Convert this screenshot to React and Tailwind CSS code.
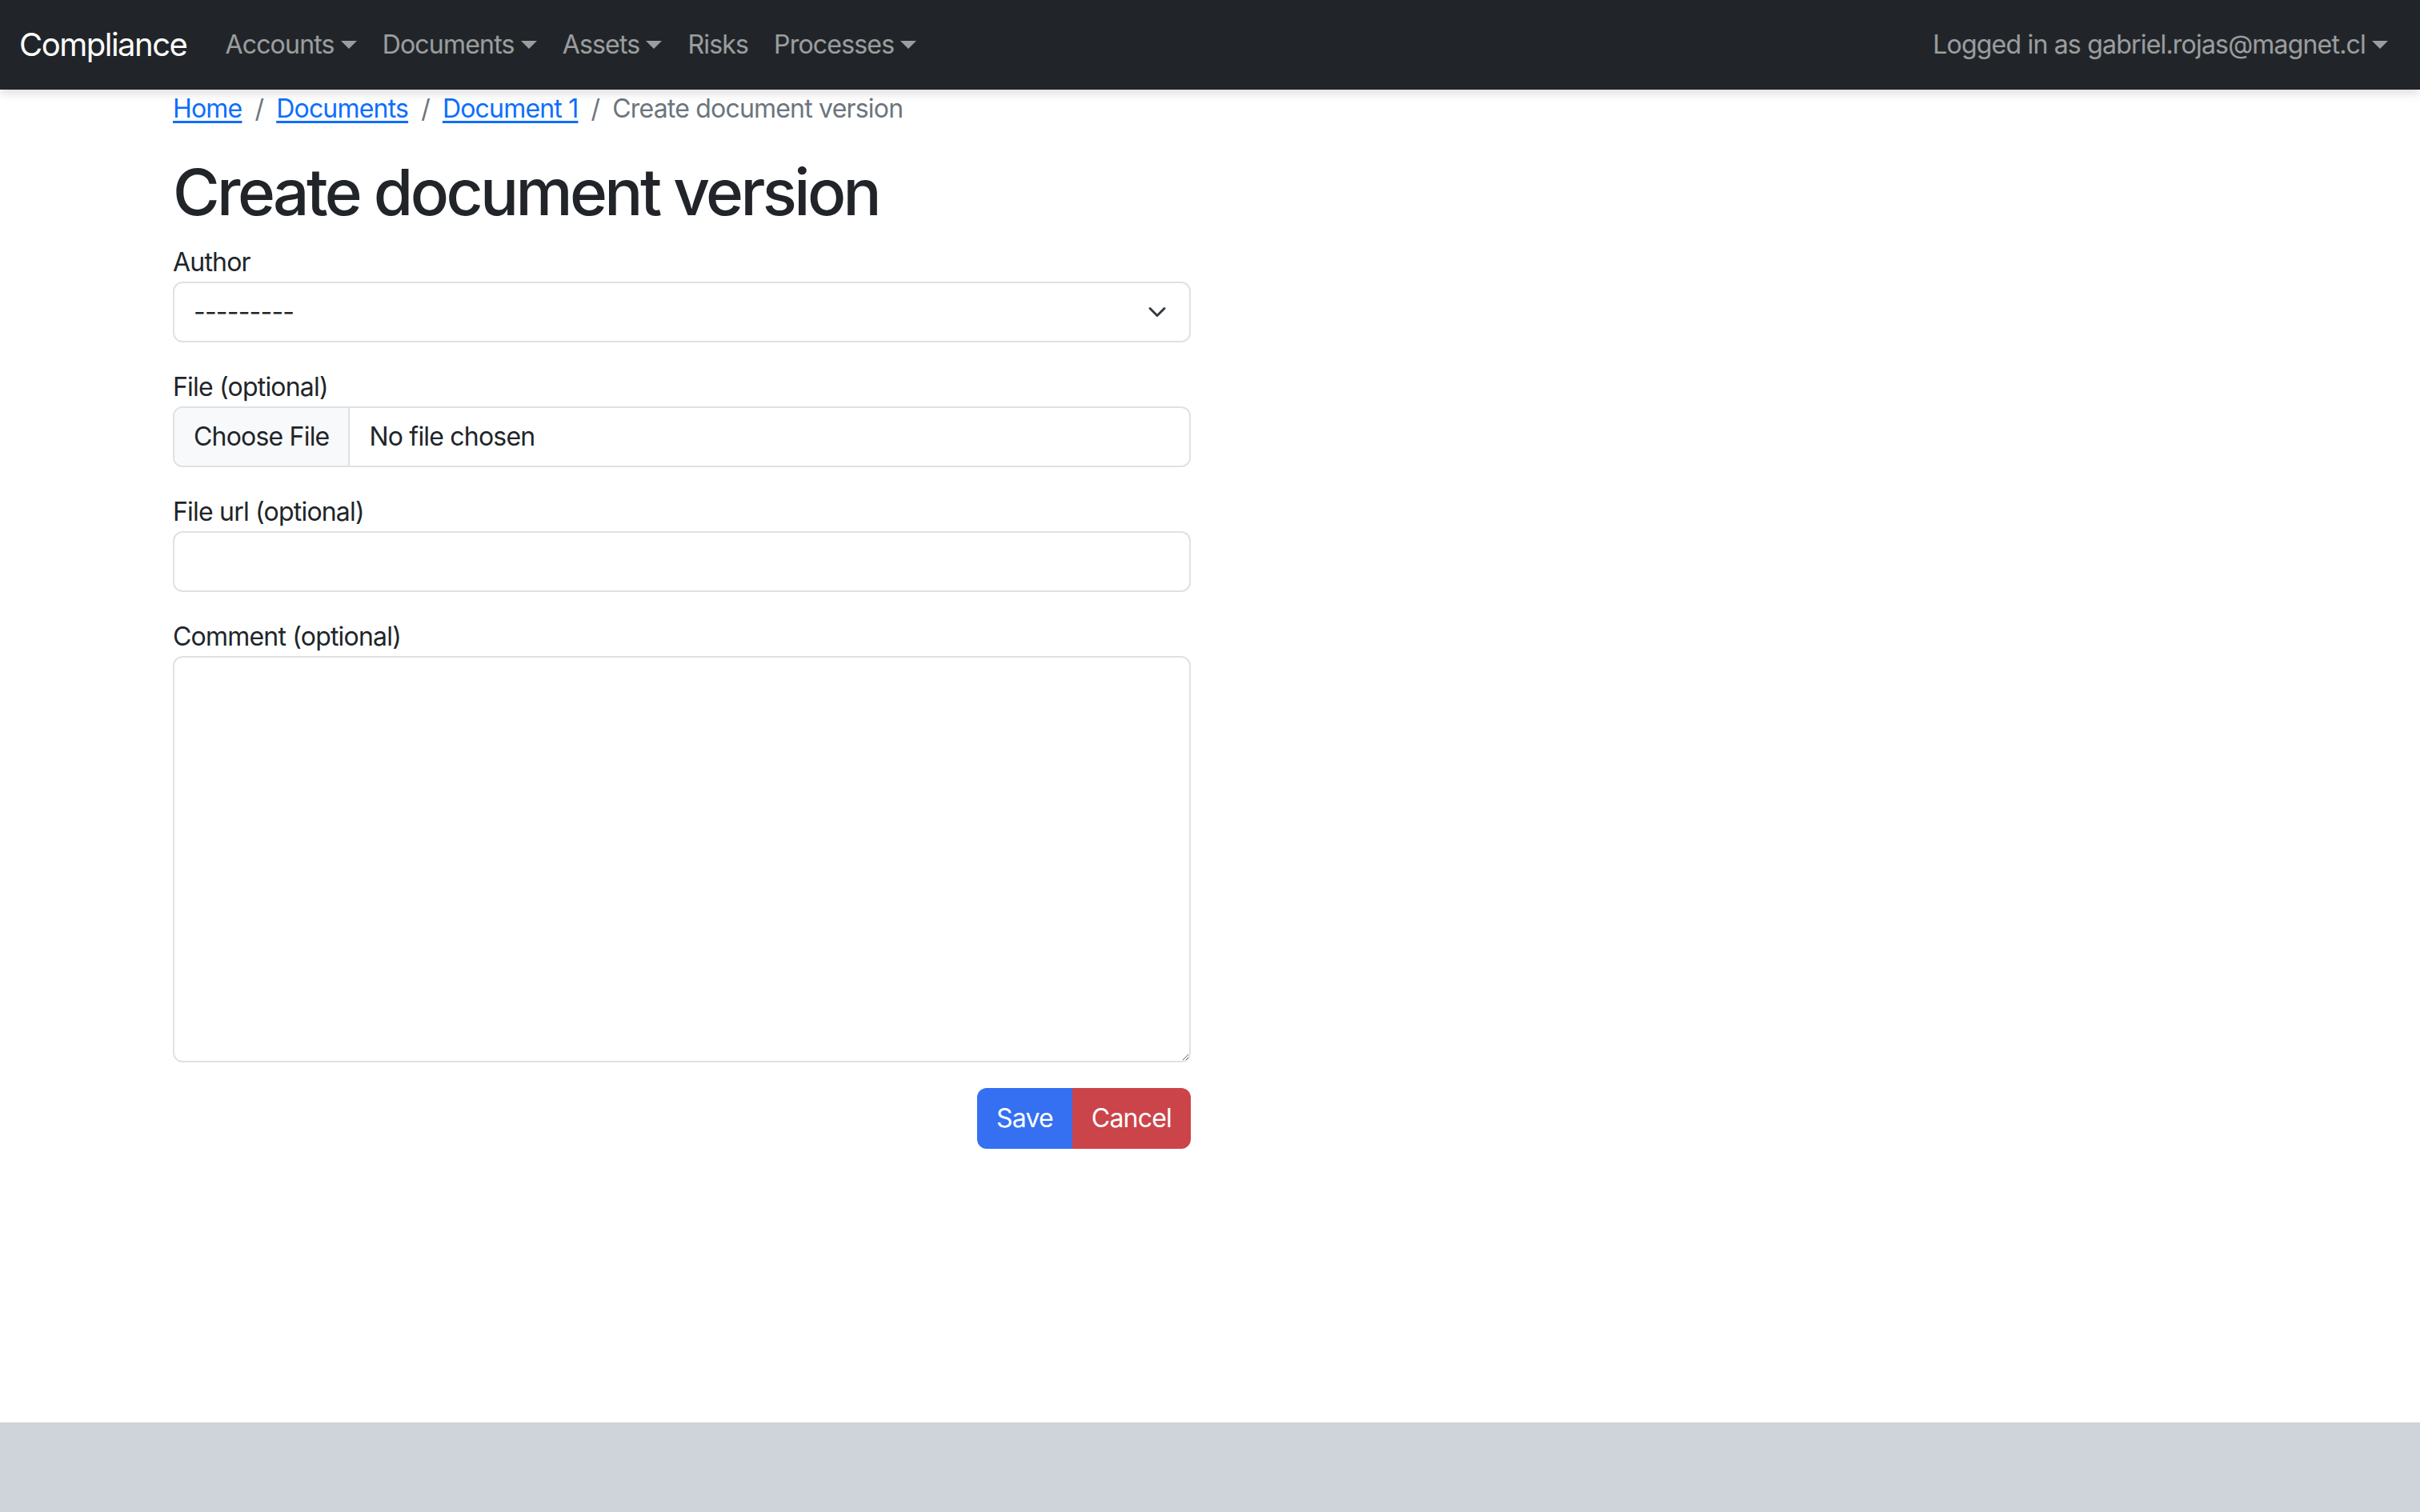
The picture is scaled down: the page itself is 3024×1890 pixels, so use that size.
import React from 'react';

const navItems = [
  { label: 'Accounts', dropdown: true },
  { label: 'Documents', dropdown: true },
  { label: 'Assets', dropdown: true },
  { label: 'Risks', dropdown: false },
  { label: 'Processes', dropdown: true },
];

const Caret = () => (
  <span className="ml-[8px] inline-block align-middle border-t-[10px] border-x-[10px] border-x-transparent border-t-current border-b-0" />
);

const FieldLabel = ({ children }) => (
  <label className="block text-[32px] leading-[48px] text-[#212529]">{children}</label>
);

const App = () => {
  return (
    <div className="min-h-screen flex flex-col bg-white font-['Inter',sans-serif] text-[#212529] tracking-[-0.8px]">
      {/* Navbar */}
      <nav className="h-[112px] bg-[#212529] px-[24px] flex items-center shadow-[0_4px_12px_rgba(0,0,0,0.15)] relative z-10">
        <span className="text-[40px] leading-[60px] text-white mr-[32px] tracking-[-1.5px]">Compliance</span>
        <ul className="flex items-center">
          {navItems.map((item) => (
            <li key={item.label} className="px-[16px] text-[32px] leading-[48px] text-white/55 flex items-center">
              {item.label}
              {item.dropdown && <Caret />}
            </li>
          ))}
        </ul>
        <div className="ml-auto px-[16px] text-[32px] leading-[48px] text-white/55 flex items-center">
          Logged in as gabriel.rojas@magnet.cl
          <Caret />
        </div>
      </nav>

      {/* Content */}
      <main className="flex-1 w-[2640px] mx-auto px-[24px]">
        <ol className="flex items-center text-[32px] leading-[48px] mb-[32px]">
          <li><a href="#" className="text-[#0d6efd] underline underline-offset-[4px]">Home</a></li>
          <li className="flex"><span className="px-[16px] text-[#6c757d]">/</span><a href="#" className="text-[#0d6efd] underline underline-offset-[4px]">Documents</a></li>
          <li className="flex"><span className="px-[16px] text-[#6c757d]">/</span><a href="#" className="text-[#0d6efd] underline underline-offset-[4px]">Document 1</a></li>
          <li className="flex"><span className="px-[16px] text-[#6c757d]">/</span><span className="text-[#6c757d]">Create document version</span></li>
        </ol>

        <h1 className="text-[80px] leading-[96px] font-medium mb-[16px] tracking-[-3.6px]">Create document version</h1>

        <form className="w-[1272px]">
          <div className="mb-[32px]">
            <FieldLabel>Author</FieldLabel>
            <div className="h-[76px] border-2 border-[#dee2e6] rounded-[12px] flex items-center px-[24px] text-[32px] text-[#212529]">
              <span className="flex-1">---------</span>
              <svg width="32" height="24" viewBox="0 0 16 16" fill="none" stroke="#343a40" strokeWidth="2" strokeLinecap="round" strokeLinejoin="round">
                <path d="m2 5 6 6 6-6" />
              </svg>
            </div>
          </div>

          <div className="mb-[32px]">
            <FieldLabel>File (optional)</FieldLabel>
            <div className="h-[76px] border-2 border-[#dee2e6] rounded-[12px] flex items-stretch overflow-hidden text-[32px]">
              <span className="bg-[#f8f9fa] px-[24px] border-r-2 border-[#dee2e6] flex items-center">Choose File</span>
              <span className="px-[24px] flex items-center">No file chosen</span>
            </div>
          </div>

          <div className="mb-[32px]">
            <FieldLabel>File url (optional)</FieldLabel>
            <input type="text" className="w-full h-[76px] border-2 border-[#dee2e6] rounded-[12px] px-[24px] text-[32px] outline-none" />
          </div>

          <div className="mb-[32px]">
            <FieldLabel>Comment (optional)</FieldLabel>
            <textarea rows={10} className="block w-full h-[508px] border-2 border-[#dee2e6] rounded-[12px] px-[24px] py-[12px] text-[32px] outline-none" />
          </div>

          <div className="flex justify-end">
            <button type="button" className="h-[76px] px-[24px] bg-[#3470f1] text-white text-[32px] rounded-l-[12px]">Save</button>
            <button type="button" className="h-[76px] px-[24px] bg-[#cb444a] text-white text-[32px] rounded-r-[12px]">Cancel</button>
          </div>
        </form>
      </main>

      <footer className="h-[112px] bg-[#ced4da]" />
    </div>
  );
};

export default App;
